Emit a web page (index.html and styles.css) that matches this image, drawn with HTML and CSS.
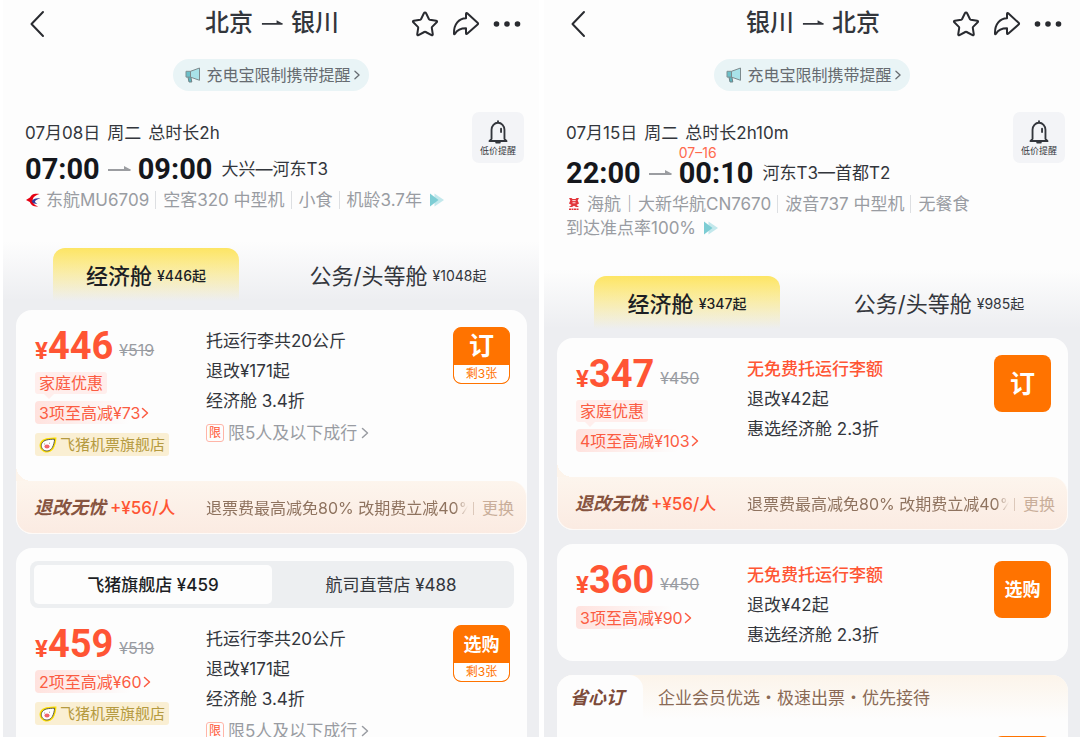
FILE: index.html
```html
<!DOCTYPE html>
<html lang="zh-CN">
    <head>
        <meta charset="UTF-8">
        <meta name="viewport" content="width=device-width, initial-scale=1">
        <title>北京 - 银川 往返机票</title>
        <link rel="stylesheet" href="styles.css">
    </head>
    <body>
        <!-- shared icons -->
        <svg class="sprite" aria-hidden="true">
            <symbol id="i-back" viewBox="0 0 16 28"><path d="M14 2 2.500 14 14 26"/></symbol>
            <symbol id="i-star" viewBox="0 0 28 28"><path d="M14 2.500q.7 0 1.100.8l2.900 5.900q.2.500.8.600l6.400.9q1.500.4.500 1.600l-4.600 4.600q-.4.400-.3 1l1 6.400q0 1.500-1.300.9L14.700 22q-.7-.3-1.400 0l-5.800 3.200q-1.300.6-1.300-.9l1-6.400q.1-.6-.3-1L2.300 12.300q-1-1.200.5-1.600l6.400-.9q.6-.1.8-.6l2.900-5.900q.4-.8 1.100-.8z"/></symbol>
            <symbol id="i-share" viewBox="0 0 28 28"><path d="M15.500 3.400q-1.500-1.200-1.500.5v4.400C7 8.500 1.700 14 2 23.500q.2 1.500 1 .2C5.500 19.500 9 18.300 14 18.300v4.800q.1 1.600 1.400.5l10.200-9q1-.9 0-1.800z"/></symbol>
            <symbol id="i-more" viewBox="0 0 28 8"><circle cx="3.500" cy="4" r="2.800"/><circle cx="14" cy="4" r="2.800"/><circle cx="24.500" cy="4" r="2.800"/></symbol>
            <symbol id="i-arrow" viewBox="0 0 24 8"><path d="M1 4h22.500v2H1zM17 1l6.500 3.500V6H17z"/></symbol>
            <symbol id="i-next" viewBox="0 0 8 12"><path d="M1.500 1.500 6.500 6 1.500 10.500"/></symbol>
            <symbol id="i-horn" viewBox="0 0 16 16">
                <path d="M2.800 9.500h3l1 5.500H4z" fill="#5cb5bf" stroke="#6f8387"/>
                <path d="M1 4.300h4.500v5.800H1z" fill="#6bc0c9" stroke="#7d9093"/>
                <path d="M5.500 4.300 14.500 1v12.300l-9-3.200z" fill="#a9e2e9" stroke="#7d8a8d" stroke-linejoin="round"/>
            </symbol>
            <symbol id="i-bell" viewBox="0 0 22 26"><path d="M11 1.200v1.300M4 20.500V10.500a7 7.500 0 0 1 14 0v10l2.300 2.300H1.700z"/><path d="M14.300 9.500V13M9 24.500h4"/></symbol>
            <symbol id="i-play" viewBox="0 0 16 16"><path d="M5.500 1.500 15 8l-9.500 6.500z" fill="#c3e8ec"/><path d="M1 1.500 9.500 8 1 14.500z" fill="#7dcdd4"/></symbol>
            <symbol id="i-ces" viewBox="0 0 18 16">
                <path d="M16.500 1C9 .2 7.500 1.800 5.500 5.200L1 8l4.300 2.200C7 13.800 9 15.600 15 15.500c-4-1.300-6.200-3.600-6.300-6.700C8.500 4.800 11 2.800 16.500 1z" fill="#e60012"/>
                <path d="M17.500 6.200C12.500 5.500 9 6.500 7.500 9.300c1.300 2.700 3.600 3 6.500 3.200-1.700-.8-2.600-1.700-2.700-3 .8-1.500 2.700-2.700 6.200-3.300z" fill="#343b96"/>
            </symbol>
            <symbol id="i-hna" viewBox="0 0 12 14">
                <path d="M1 1h2.500l1 1h3l1-1H11L9.700 3.600 11 6.500 8.500 8 11 10H8L6 8.700 4 10H1l2.500-2L1 6.500l1.300-2.900z" fill="#e2353a"/>
                <path d="M4.300 3.600h3.400M4.500 5.800h3" stroke="#fff" stroke-width=".9"/>
                <path d="M1 12.300h10" stroke="#e2353a" stroke-width="1.500" stroke-dasharray="2 .5"/>
            </symbol>
            <symbol id="i-pig" viewBox="0 0 18 16">
                <path d="M17.500.5c-.2 4.500-1.300 8.500-2.800 11C12.300 15 8.500 16.500 5 15 1 13.300-.5 9 1.200 5.500 3.500.8 10 .8 17.500.5z" fill="#ffe100"/>
                <path d="M15.600 2.200c-.3 3.300-1 6-2.200 8.200-1.800 3.300-5 4.300-7.800 3.100-3-1.300-4-4.500-2.800-7.100C4.700 2.700 9.500 2.300 15.600 2.200z" fill="#fff" stroke="#5b5a4d"/>
                <path d="M5.300 7h.8M10 6.200h.8" stroke="#77766a"/>
                <ellipse cx="8" cy="9.500" rx="2.600" ry="2" fill="#f0656d"/>
            </symbol>
        </svg>

        <main class="compare">
            <section class="trip">
                <header class="nav">
                    <button class="icon-btn back" aria-label="返回"><svg class="line"><use href="#i-back"/></svg></button>
                    <h1>北京 <svg class="to"><use href="#i-arrow"/></svg> 银川</h1>
                    <div class="actions">
                        <button class="icon-btn" aria-label="收藏"><svg class="line"><use href="#i-star"/></svg></button>
                        <button class="icon-btn" aria-label="分享"><svg class="line"><use href="#i-share"/></svg></button>
                        <button class="icon-btn more" aria-label="更多"><svg><use href="#i-more"/></svg></button>
                    </div>
                </header>
                <a class="notice" href="#"><svg class="horn"><use href="#i-horn"/></svg>充电宝限制携带提醒<svg class="next"><use href="#i-next"/></svg></a>

                <div class="flight">
                    <div class="flight-info">
                        <p class="date"><span>07月08日</span><span>周二</span><span>总时长2h</span></p>
                        <div class="times">
                            <time>07:00</time>
                            <svg class="to"><use href="#i-arrow"/></svg>
                            <time>09:00</time>
                            <span class="airports">大兴—河东T3</span>
                        </div>
                        <div class="detail">
                            <svg class="airline"><use href="#i-ces"/></svg>
                            <span>东航MU6709</span><span>空客320 中型机</span><span>小食</span><span>机龄3.7年</span>
                            <svg class="play"><use href="#i-play"/></svg>
                        </div>
                    </div>
                    <button class="alert"><svg class="bell"><use href="#i-bell"/></svg>低价提醒</button>
                </div>

                <div class="cabins">
                    <button class="cabin active">经济舱<small>¥446起</small></button>
                    <button class="cabin">公务/头等舱<small>¥1048起</small></button>
                </div>

                <article class="card">
                    <div class="fare has-foot">
                        <div class="offer">
                            <div class="price"><b><i>¥</i>446</b><del>¥519</del></div>
                            <span class="family">家庭优惠</span>
                            <a class="cut" href="#">3项至高减¥73<svg class="next"><use href="#i-next"/></svg></a>
                            <span class="shop"><svg class="pig"><use href="#i-pig"/></svg>飞猪机票旗舰店</span>
                        </div>
                        <ul class="rules">
                            <li>托运行李共20公斤</li>
                            <li>退改¥171起</li>
                            <li>经济舱 3.4折</li>
                            <li class="limit"><em>限</em>限5人及以下成行<svg class="next"><use href="#i-next"/></svg></li>
                        </ul>
                        <button class="buy left"><span class="big">订</span><small>剩3张</small></button>
                    </div>
                    <div class="foot">
                        <strong>退改无忧</strong><span class="add">+¥56/人</span>
                        <span class="desc">退票费最高减免80% 改期费立减40%</span>
                        <a class="swap" href="#">更换</a>
                    </div>
                </article>

                <article class="card">
                    <div class="sellers">
                        <button class="active">飞猪旗舰店 ¥459</button>
                        <button>航司直营店 ¥488</button>
                    </div>
                    <div class="fare">
                        <div class="offer">
                            <div class="price"><b><i>¥</i>459</b><del>¥519</del></div>
                            <a class="cut" href="#">2项至高减¥60<svg class="next"><use href="#i-next"/></svg></a>
                            <span class="shop"><svg class="pig"><use href="#i-pig"/></svg>飞猪机票旗舰店</span>
                        </div>
                        <ul class="rules">
                            <li>托运行李共20公斤</li>
                            <li>退改¥171起</li>
                            <li>经济舱 3.4折</li>
                            <li class="limit"><em>限</em>限5人及以下成行<svg class="next"><use href="#i-next"/></svg></li>
                        </ul>
                        <button class="buy left"><span>选购</span><small>剩3张</small></button>
                    </div>
                </article>
            </section>

            <section class="trip">
                <header class="nav">
                    <button class="icon-btn back" aria-label="返回"><svg class="line"><use href="#i-back"/></svg></button>
                    <h1>银川 <svg class="to"><use href="#i-arrow"/></svg> 北京</h1>
                    <div class="actions">
                        <button class="icon-btn" aria-label="收藏"><svg class="line"><use href="#i-star"/></svg></button>
                        <button class="icon-btn" aria-label="分享"><svg class="line"><use href="#i-share"/></svg></button>
                        <button class="icon-btn more" aria-label="更多"><svg><use href="#i-more"/></svg></button>
                    </div>
                </header>
                <a class="notice" href="#"><svg class="horn"><use href="#i-horn"/></svg>充电宝限制携带提醒<svg class="next"><use href="#i-next"/></svg></a>

                <div class="flight">
                    <div class="flight-info">
                        <p class="date"><span>07月15日</span><span>周二</span><span>总时长2h10m</span></p>
                        <div class="times overnight">
                            <time>22:00</time>
                            <svg class="to"><use href="#i-arrow"/></svg>
                            <time>00:10<sup>07–16</sup></time>
                            <span class="airports">河东T3—首都T2</span>
                        </div>
                        <div class="detail">
                            <svg class="airline"><use href="#i-hna"/></svg>
                            <span>海航｜大新华航CN7670</span><span>波音737 中型机</span><span>无餐食</span>
                        </div>
                        <div class="detail">
                            <span>到达准点率100%</span>
                            <svg class="play"><use href="#i-play"/></svg>
                        </div>
                    </div>
                    <button class="alert"><svg class="bell"><use href="#i-bell"/></svg>低价提醒</button>
                </div>

                <div class="cabins">
                    <button class="cabin active">经济舱<small>¥347起</small></button>
                    <button class="cabin">公务/头等舱<small>¥985起</small></button>
                </div>

                <article class="card">
                    <div class="fare has-foot">
                        <div class="offer">
                            <div class="price"><b><i>¥</i>347</b><del>¥450</del></div>
                            <span class="family">家庭优惠</span>
                            <a class="cut" href="#">4项至高减¥103<svg class="next"><use href="#i-next"/></svg></a>
                        </div>
                        <ul class="rules">
                            <li class="warn">无免费托运行李额</li>
                            <li>退改¥42起</li>
                            <li>惠选经济舱 2.3折</li>
                        </ul>
                        <button class="buy"><span class="big">订</span></button>
                    </div>
                    <div class="foot">
                        <strong>退改无忧</strong><span class="add">+¥56/人</span>
                        <span class="desc">退票费最高减免80% 改期费立减40%</span>
                        <a class="swap" href="#">更换</a>
                    </div>
                </article>

                <article class="card">
                    <div class="fare">
                        <div class="offer">
                            <div class="price"><b><i>¥</i>360</b><del>¥450</del></div>
                            <a class="cut" href="#">3项至高减¥90<svg class="next"><use href="#i-next"/></svg></a>
                        </div>
                        <ul class="rules">
                            <li class="warn">无免费托运行李额</li>
                            <li>退改¥42起</li>
                            <li>惠选经济舱 2.3折</li>
                        </ul>
                        <button class="buy"><span>选购</span></button>
                    </div>
                </article>

                <article class="card">
                    <div class="easy">
                        <strong>省心订</strong>
                        <span>企业会员优选・极速出票・优先接待</span>
                    </div>
                    <div class="fare">
                        <div class="offer"></div>
                        <ul class="rules"></ul>
                        <button class="buy" aria-label="订"></button>
                    </div>
                </article>
            </section>
        </main>
    </body>
</html>
```

FILE: styles.css
```css
* {
    box-sizing: border-box;
}
body {
    margin: 0;
    background: #fff;
    color: #33363c;
    font: 17px/24px Inter, "Noto Sans CJK SC", sans-serif;
}
h1, p, ul {
    margin: 0;
    padding: 0;
    font-weight: 400;
}
ul {
    list-style: none;
}
button {
    padding: 0;
    border: 0;
    background: none;
    color: inherit;
    font: inherit;
    cursor: pointer;
}
a {
    color: inherit;
    text-decoration: none;
}
svg {
    flex: none;
    fill: currentColor;
}
.sprite {
    display: none;
}
.line, .next, .bell {
    fill: none;
    stroke: currentColor;
    stroke-width: 2;
    stroke-linecap: round;
    stroke-linejoin: round;
}
.next {
    width: 8px;
    height: 12px;
    stroke-width: 1.5;
}
.compare {
    display: grid;
    grid-template-columns: 1fr 1fr;
    gap: 5px;
    height: 100vh;
    padding-left: 3px;
    overflow: hidden;
}
.trip {
    display: flex;
    flex-direction: column;
    min-width: 0;
    background: linear-gradient(#fdfdfd, #fdfdfd) 0 0 / 100% 200px no-repeat #edeef1;
}

/* top bar */
.nav {
    display: grid;
    grid-template-columns: 1fr auto 1fr;
    align-items: center;
    height: 46px;
    padding: 2px 18px 0 26px;
}
.nav h1 {
    display: flex;
    align-items: center;
    gap: 8px;
    margin-top: -2px;
    padding-right: 6px;
    font-size: 24px;
    line-height: 32px;
    font-weight: 500;
}
.nav .to {
    width: 22px;
    height: 8px;
}
.icon-btn {
    display: flex;
    color: #292b30;
}
.icon-btn svg {
    width: 28px;
    height: 28px;
}
.back svg {
    width: 16px;
}
.more svg {
    height: 8px;
}
.actions {
    display: flex;
    justify-content: flex-end;
    align-items: center;
    gap: 13px;
}
.notice {
    display: flex;
    align-items: center;
    align-self: center;
    height: 32px;
    margin-top: 13px;
    padding: 0 8px 0 12px;
    border-radius: 16px;
    background: #e9f4f6;
    color: #666b70;
    font-size: 16px;
}
.horn {
    width: 16px;
    height: 16px;
    margin-right: 5px;
}
.notice .next {
    height: 10px;
    margin-left: 2px;
}

/* flight summary */
.flight {
    display: flex;
    justify-content: space-between;
    align-items: flex-start;
    padding: 21px 15px 0 22px;
    background: #fdfdfd;
}
.flight-info {
    padding-top: 9px;
}
.date {
    display: flex;
    gap: 7px;
}
.times {
    display: flex;
    align-items: center;
    gap: 7px;
    margin-top: 5px;
    line-height: 38px;
}
.overnight {
    margin-top: 9px;
}
.times time {
    position: relative;
    color: #15171c;
    font-family: Roboto, sans-serif;
    font-size: 29px;
    font-weight: 700;
}
.times sup {
    position: absolute;
    top: -9px;
    left: 0;
    color: #ff6a4d;
    font: 14px/16px Inter, sans-serif;
}
.times .to {
    width: 24px;
    height: 8px;
    color: #9b9da1;
}
.airports {
    padding-left: 2px;
}
.detail {
    display: flex;
    align-items: center;
    color: #999ca2;
}
.detail span + span::before {
    content: "";
    display: inline-block;
    width: 1px;
    height: 18px;
    margin: 0 7px 0 6px;
    background: #dddfe2;
    vertical-align: -3px;
}
.airline {
    width: 16px;
    height: 14px;
    margin-right: 5px;
}
.play {
    width: 16px;
    height: 16px;
    margin-left: 7px;
}
.alert {
    display: flex;
    flex-direction: column;
    align-items: center;
    width: 52px;
    height: 51px;
    padding-top: 8px;
    border-radius: 7px;
    background: #f3f4f7;
    font-size: 9px;
    line-height: 14px;
}
.bell {
    width: 22px;
    height: 24px;
}

/* cabin tabs */
.cabins {
    display: grid;
    grid-template-columns: 1fr 1fr;
    gap: 66px;
    padding: 36px 48px 9px 50px;
    background: linear-gradient(#fdfdfd 30%, #edeef1 90%);
}
.cabin {
    display: flex;
    justify-content: center;
    align-items: center;
    gap: 5px;
    height: 53px;
    padding-top: 2px;
    font-size: 22px;
    white-space: nowrap;
}
.cabin small {
    font-size: 14px;
}
.cabin.active {
    border-radius: 12px 12px 0 0;
    background: linear-gradient(#fde564, rgba(253, 229, 100, 0));
    color: #1c1e24;
    font-weight: 500;
}

/* fare cards */
.card {
    flex: none;
    margin: 0 12px 14px 13px;
    overflow: hidden;
    border-radius: 16px;
    background: #fdfdfd;
}
.fare {
    display: grid;
    grid-template-columns: 171px 1fr auto;
    align-items: start;
    padding: 16px 17px 0 19px;
}
.has-foot {
    background: radial-gradient(circle at 16px 0, transparent 16px, #fdf4eb 16px) left bottom / 16px 16px no-repeat;
}
.offer {
    display: flex;
    flex-direction: column;
    align-items: flex-start;
    padding-bottom: 25px;
    color: #fb5c42;
    font-size: 16px;
    line-height: 22px;
}
.price {
    display: flex;
    align-items: center;
    gap: 6px;
    height: 44px;
    margin-bottom: 2px;
}
.price b {
    color: #ff5534;
    font-family: Roboto, sans-serif;
    font-size: 38px;
    line-height: 40px;
}
.price i {
    font-size: 24px;
    font-style: normal;
}
.price del {
    padding-top: 4px;
    color: #999ca2;
}
.family {
    position: relative;
    margin-bottom: 7px;
    padding: 0 4px;
    border-radius: 3px;
    background: #ffeeec;
}
.family::after {
    content: "";
    position: absolute;
    top: 100%;
    left: 9px;
    border: 5px solid transparent;
    border-top-color: #ffeeec;
    border-bottom: 0;
}
.cut {
    display: flex;
    align-items: center;
    gap: 1px;
    height: 23px;
    padding: 0 4px;
    border-radius: 4px;
    background: linear-gradient(90deg, #ffe2de, rgba(255, 240, 238, 0) 80%);
}
.shop {
    display: flex;
    align-items: center;
    height: 23px;
    margin-top: 9px;
    padding: 0 4px;
    border-radius: 3px;
    background: #faefd3;
    color: #b59a40;
    font-size: 15px;
}
.pig {
    width: 18px;
    height: 16px;
    margin-right: 3px;
}
.rules {
    padding-bottom: 11px;
    line-height: 30px;
}
.warn {
    color: #ff5534;
    font-weight: 500;
}
.limit {
    display: flex;
    align-items: center;
    gap: 4px;
    color: #999ca2;
    line-height: 34px;
}
.limit em {
    width: 18px;
    border: 1px solid #ffb5a8;
    border-radius: 3px;
    color: #ff5534;
    font-size: 12px;
    font-style: normal;
    line-height: 16px;
    text-align: center;
}
.buy {
    display: flex;
    flex-direction: column;
    align-items: stretch;
    justify-content: center;
    width: 57px;
    height: 57px;
    margin-top: 1px;
    overflow: hidden;
    border-radius: 8px;
    background: #ff7300;
    color: #fff;
    font-size: 18px;
    font-weight: 700;
    text-align: center;
}
.buy .big {
    font-size: 25px;
}
.buy.left {
    justify-content: space-between;
    border: 1px solid #ff7300;
}
.buy.left span {
    line-height: 37px;
}
.buy small {
    border-radius: 0 0 7px 7px;
    background: #fff;
    color: #ff7300;
    font-size: 12px;
    font-weight: 400;
    line-height: 18px;
}

/* refund protection strip */
.foot {
    display: flex;
    align-items: center;
    height: 53px;
    padding: 2px 12px 0 17px;
    border: 1px solid #fefaf7;
    border-top: 0;
    border-radius: 0 16px 16px 16px;
    background: linear-gradient(#fdf5ed, #fbebe2);
    color: #8f735f;
    font-size: 16px;
    white-space: nowrap;
}
.foot strong {
    flex: none;
    color: #875440;
    font-size: 18px;
    font-style: italic;
}
.foot .add {
    flex: none;
    width: 100px;
    padding-left: 4px;
    color: #ff5534;
    font-size: 17px;
    font-weight: 500;
}
.desc {
    flex: 1;
    min-width: 0;
    overflow: hidden;
    -webkit-mask-image: linear-gradient(90deg, #000 95%, transparent);
    mask-image: linear-gradient(90deg, #000 95%, transparent);
}
.swap {
    display: flex;
    align-items: center;
    color: #c9ae9a;
}
.swap::before {
    content: "";
    width: 1px;
    height: 13px;
    margin: 0 8px 0 5px;
    background: #dcc8ba;
}

/* seller switch */
.sellers {
    display: grid;
    grid-template-columns: 1fr 1fr;
    height: 47px;
    margin: 13px 13px 0 14px;
    padding: 4px;
    border-radius: 8px;
    background: #edeff1;
}
.sellers .active {
    border-radius: 5px;
    background: #fdfdfd;
    color: #1c1e24;
    font-weight: 500;
}

.easy {
    display: flex;
    align-items: stretch;
    height: 44px;
    background: linear-gradient(#fcf4ea, #fdfdfd);
    color: #8a6a55;
    line-height: 46px;
}
.easy strong {
    width: 86px;
    padding-left: 13px;
    border-radius: 0 14px 0 0;
    background: #fdfdfd;
    color: #7c4a39;
    font-size: 18px;
    font-style: italic;
}
.easy span {
    padding-left: 15px;
}
```
